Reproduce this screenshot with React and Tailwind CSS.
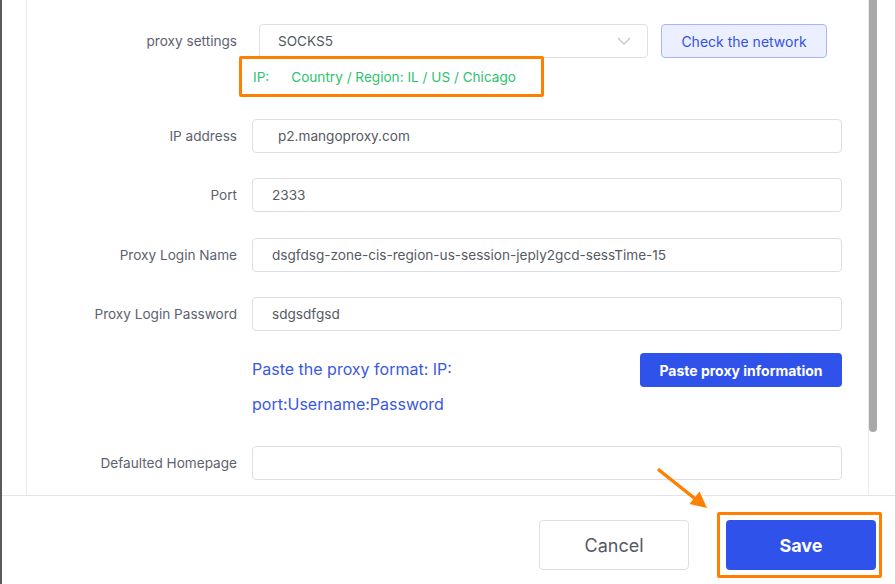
import React from "react";

function Label({ children }) {
  return (
    <div className="w-[210px] shrink-0 text-right text-[13.6px] text-[#5d6270] leading-5">
      {children}
    </div>
  );
}

function Field({ label, value, className = "", padClass = "pl-[19px]" }) {
  return (
    <div className={"flex items-center " + className}>
      <Label>{label}</Label>
      <div className={"ml-[15px] flex h-[34px] w-[590px] items-center rounded-[4px] border border-[#dcdfe6] bg-white pr-[19px] text-[13.6px] text-[#555a63] " + padClass}>
        {value}
      </div>
    </div>
  );
}

export default function App() {
  return (
    <div
      className="relative flex h-[584px] w-[895px] flex-col overflow-hidden bg-white"
      style={{ fontFamily: "Inter, 'Noto Sans', sans-serif" }}
    >
      {/* left dark edge */}
      <div className="absolute left-0 top-0 h-full w-[2px] bg-[#5a5a5a]" />

      {/* scroll area */}
      <div className="flex h-[496px] shrink-0 border-b border-[#e4e4e7]">
        <div className="w-[27px] shrink-0 border-r border-[#ececef]" />
        <div className="flex w-[841px] shrink-0 flex-col pt-[24px]">
          {/* proxy settings */}
          <div className="flex items-center">
            <Label>proxy settings</Label>
            <div className="ml-[22px] flex h-[34px] w-[389px] items-center justify-between rounded-[4px] border border-[#dcdfe6] pl-[18px] pr-[16px] text-[13.6px] text-[#555a63]">
              <span>SOCKS5</span>
              <svg width="14" height="8" viewBox="0 0 14 8" fill="none">
                <path d="M1 1l6 6 6-6" stroke="#c0c4cc" strokeWidth="1.3" />
              </svg>
            </div>
            <div className="ml-[13px] flex h-[34px] w-[166px] items-center justify-center rounded-[4px] border border-[#a6b5fb] bg-[#ebefff] text-[14px] text-[#3452e1]">
              Check the network
            </div>
          </div>

          {/* IP line */}
          <div className="relative ml-[226px] mt-[9px] flex h-5 items-center text-[13.6px] leading-5 text-[#2fc26e]">
            <span>IP:</span>
            <span className="ml-[22px]">Country / Region: IL / US / Chicago</span>
            <div className="pointer-events-none absolute left-[-14px] top-[-11px] h-[41px] w-[305px] rounded-[2px] border-[3px] border-[#ff8000]" />
          </div>

          <Field label="IP address" value="p2.mangoproxy.com" className="mt-[32px]" padClass="pl-[25px]" />
          <Field label="Port" value="2333" className="mt-[25px]" />
          <Field
            label="Proxy Login Name"
            value="dsgfdsg-zone-cis-region-us-session-jeply2gcd-sessTime-15"
            className="mt-[26px]"
          />
          <Field label="Proxy Login Password" value="sdgsdfgsd" className="mt-[25px]" />

          {/* paste */}
          <div className="ml-[225px] mt-[21px] flex w-[590px] items-start justify-between">
            <div className="text-[16px] leading-[35px] text-[#3a58e0]">
              <div>Paste the proxy format: IP:</div>
              <div>port:Username:Password</div>
            </div>
            <div className="mt-[1px] flex h-[34px] w-[202px] items-center justify-center rounded-[4px] bg-[#2f52eb] text-[14px] font-bold text-white">
              Paste proxy information
            </div>
          </div>

          <Field label="Defaulted Homepage" value="" className="mt-[24px]" />
        </div>
        <div className="flex-1 border-l border-[#ececef]">
          <div className="h-[432px] w-[8px] rounded-b-[4px] bg-[#a8a8a8]" />
        </div>
      </div>

      {/* footer */}
      <div className="flex flex-1 items-start justify-end pr-[19px] pt-[24px]">
        <div className="flex h-[50px] w-[150px] items-center justify-center rounded-[4px] border border-[#dcdfe6] text-[18px] text-[#555a63]">
          Cancel
        </div>
        <div className="relative ml-[37px] flex h-[50px] w-[150px] items-center justify-center rounded-[4px] bg-[#2f52eb] text-[18px] font-bold text-white">
          Save
          <div className="pointer-events-none absolute left-[-9px] top-[-8px] h-[66px] w-[165px] rounded-[2px] border-[3px] border-[#ff8000]" />
        </div>
      </div>

      {/* arrow annotation */}
      <svg
        className="pointer-events-none absolute left-0 top-0"
        width="895"
        height="584"
        viewBox="0 0 895 584"
      >
        <line x1="659" y1="470" x2="696" y2="499.5" stroke="#ff8000" strokeWidth="3.5" strokeLinecap="round" />
        <polygon points="707,508 689.5,504 699.5,491.5" fill="#ff8000" />
      </svg>
    </div>
  );
}
